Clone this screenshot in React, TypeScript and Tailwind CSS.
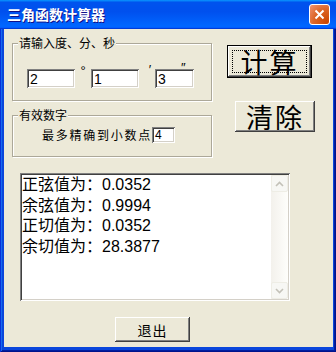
import React from 'react';

const sunken =
  'bg-white shadow-[inset_1px_1px_0_#808080,inset_-1px_-1px_0_#ffffff,inset_2px_2px_0_#404040,inset_-2px_-2px_0_#d4d0c8]';
const raised =
  'bg-[#ece9d8] shadow-[inset_-1px_-1px_0_#404040,inset_1px_1px_0_#ffffff,inset_-2px_-2px_0_#808080,inset_2px_2px_0_#ece9d8]';

function Field({ value, w }: { value: string; w: string }) {
  return (
    <div className={`${sunken} ${w} h-[19px] pl-[3px] pt-[2px] text-[14px] leading-[16px] font-['Liberation_Sans',sans-serif]`}>
      {value}
    </div>
  );
}

function Chevron({ up }: { up?: boolean }) {
  return (
    <svg width="9" height="6" viewBox="0 0 9 6">
      <path d={up ? 'M1 5 L4.5 1.5 L8 5' : 'M1 1 L4.5 4.5 L8 1'} stroke="#c3c1b8" strokeWidth="1.6" fill="none" />
    </svg>
  );
}

export default function App() {
  const lines = ['正弦值为：0.0352', '余弦值为：0.9994', '正切值为：0.0352', '余切值为：28.3877'];

  return (
    <div className="w-[336px] h-[352px] flex flex-col bg-[#0a46dc] shadow-[inset_1px_0_0_#0831d9,inset_-1px_-1px_0_#00138c,inset_2px_0_0_#166aee,inset_-2px_-2px_0_#001ea0] font-['Noto_Sans_CJK_SC',sans-serif] text-black select-none">
      {/* title bar */}
      <div className="h-[29px] shrink-0 flex items-center justify-between pl-[7px] pr-[6px] bg-[linear-gradient(180deg,#0997ff,#0053ee_8%,#0050ee_40%,#0066ff_88%,#0066ff_93%,#005bff_95%,#003dd7_96%,#003dd7)]">
        <span className="text-white font-bold text-[14px] [text-shadow:1px_1px_0_#0f1089]">三角函数计算器</span>
        <div className="w-[21px] h-[21px] rounded-[3px] border border-white bg-[radial-gradient(circle_at_90%_90%,#cc4600_0%,#dc6527_55%,#f19574_100%)] flex items-center justify-center">
          <svg width="11" height="11" viewBox="0 0 11 11">
            <path d="M1.5 1.5 L9.5 9.5 M9.5 1.5 L1.5 9.5" stroke="#fff" strokeWidth="2" />
          </svg>
        </div>
      </div>

      {/* client area */}
      <div className="flex-1 ml-[4px] mr-[3px] mb-[5px] bg-[#ece9d8] flex flex-col">
        <div className="flex">
          <div className="ml-[8px] w-[200px] flex flex-col">
            {/* group 1 */}
            <div className="relative mt-[14px] h-[58px] border border-[#aca899] shadow-[1px_1px_0_#fff,inset_1px_1px_0_#fff] pl-[14px] pt-[25px]">
              <span className="absolute -top-[8px] left-[5px] px-px bg-[#ece9d8] text-[12px] leading-[14px]">请输入度、分、秒</span>
              <div className="flex items-start font-['Liberation_Sans',sans-serif]">
                <Field value="2" w="w-[48px]" />
                <span className="w-[16px] text-center text-[13px] leading-none -mt-[5px]">°</span>
                <Field value="1" w="w-[48px]" />
                <span className="w-[16px] text-center text-[13px] leading-none -mt-[6px] pl-[6px]">′</span>
                <div className="relative">
                  <Field value="3" w="w-[39px]" />
                  <span className="absolute -top-[8px] left-[26px] text-[13px] leading-none">″</span>
                </div>
              </div>
            </div>
            {/* group 2 */}
            <div className="relative mt-[14px] h-[42px] border border-[#aca899] shadow-[1px_1px_0_#fff,inset_1px_1px_0_#fff] pl-[29px] pt-[11px]">
              <span className="absolute -top-[8px] left-[5px] px-px bg-[#ece9d8] text-[12px] leading-[14px]">有效数字</span>
              <div className="flex items-center">
                <span className="text-[12px] leading-[16px] tracking-[1.75px]">最多精确到小数点</span>
                <div className={`${sunken} w-[23px] h-[16px] pl-[3px] pt-[1px] text-[12px] leading-[14px] font-['Liberation_Sans',sans-serif]`}>4</div>
              </div>
            </div>
          </div>

          <div className="flex flex-col items-start">
            <button className={`${raised} ml-[15px] mt-[16px] w-[85px] h-[33px] border border-black p-[4px]`}>
              <div className="h-full w-full border border-dotted border-black flex items-center justify-center text-[27px] leading-none tracking-[2px]">
                计算
              </div>
            </button>
            <button className={`${raised} ml-[23px] mt-[23px] w-[80px] h-[31px] flex items-center justify-center text-[27px] leading-none tracking-[2px]`}>
              清除
            </button>
          </div>
        </div>

        {/* output */}
        <div className={`${sunken} ml-[16px] mt-[16px] w-[270px] h-[128px] p-[2px] flex`}>
          <div className="flex-1 text-[16px] leading-[20.67px] font-['Liberation_Sans','Noto_Sans_CJK_SC',sans-serif]">
            {lines.map((l) => (
              <div key={l}>{l}</div>
            ))}
          </div>
          <div className="w-[17px] flex flex-col justify-between bg-[linear-gradient(90deg,#f3f1ec,#fefefb)]">
            <div className="h-[17px] rounded-[2px] border border-[#eeede5] bg-[#f7f7f4] flex items-center justify-center">
              <Chevron up />
            </div>
            <div className="h-[17px] rounded-[2px] border border-[#eeede5] bg-[#f7f7f4] flex items-center justify-center">
              <Chevron />
            </div>
          </div>
        </div>

        <button className={`${raised} ml-[111px] mt-[16px] w-[75px] h-[25px] flex items-center justify-center text-[14px] leading-none tracking-[1px]`}>
          退出
        </button>
      </div>
    </div>
  );
}
